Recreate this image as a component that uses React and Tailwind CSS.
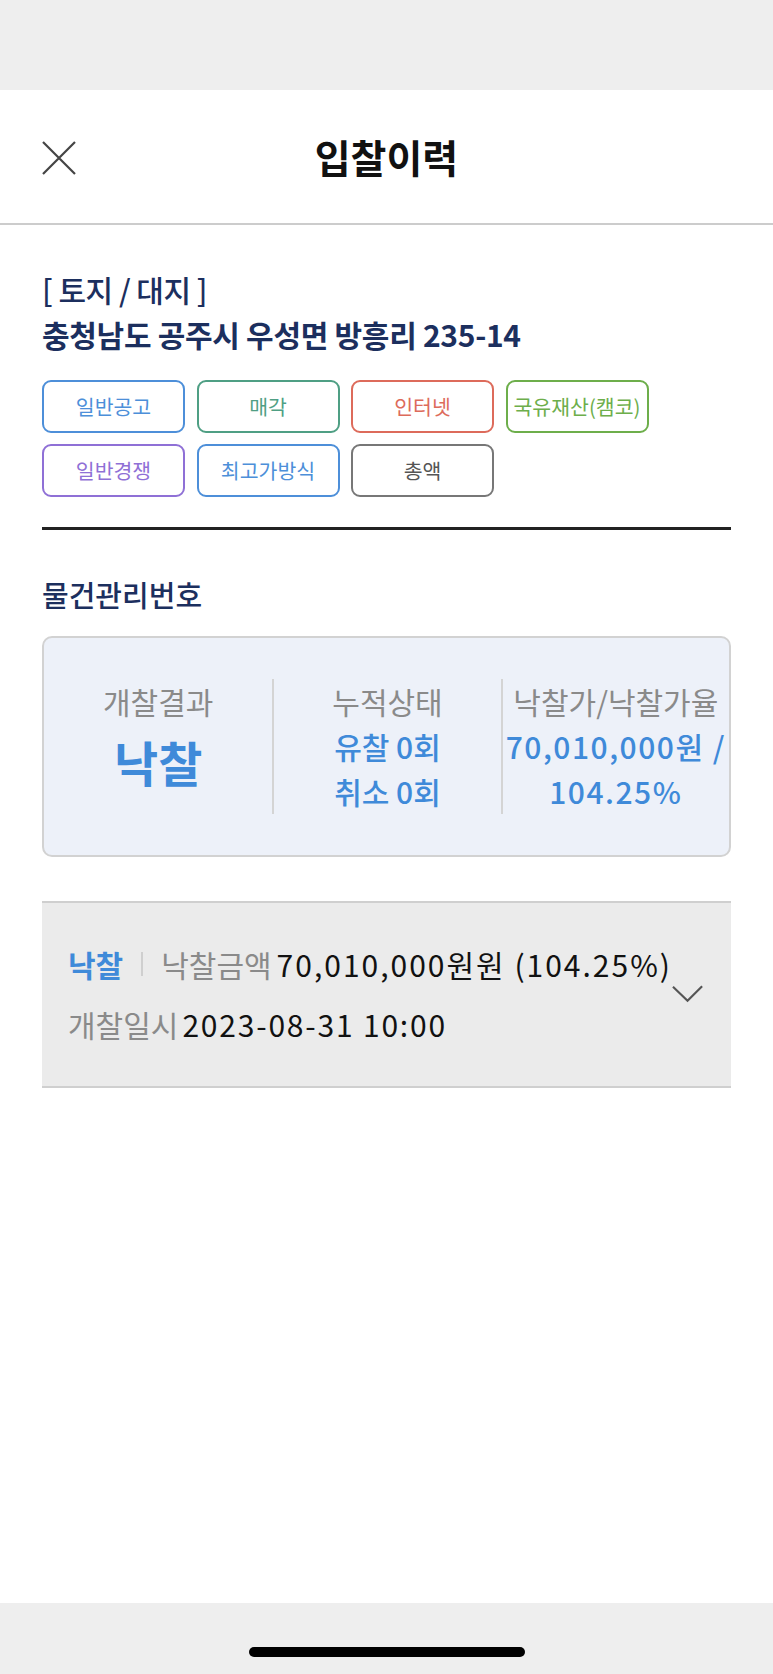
const tags = [
  { label: "일반공고", cls: "border-[#4d8fd9] text-[#4d8fd9]" },
  { label: "매각", cls: "border-[#4f9f84] text-[#4f9f84]" },
  { label: "인터넷", cls: "border-[#dd6b5b] text-[#dd6b5b]" },
  { label: "국유재산(캠코)", cls: "border-[#6dae4b] text-[#6dae4b]" },
  { label: "일반경쟁", cls: "border-[#8f70d6] text-[#8f70d6]" },
  { label: "최고가방식", cls: "border-[#4d8fd9] text-[#4d8fd9]" },
  { label: "총액", cls: "border-[#777777] text-[#555555]" },
];

function CloseIcon() {
  return (
    <svg width="34" height="34" viewBox="0 0 34 34" fill="none">
      <path d="M1 1L33 33M33 1L1 33" stroke="#444" strokeWidth="2.2" />
    </svg>
  );
}

function ChevronDown() {
  return (
    <svg width="32" height="18" viewBox="0 0 32 18" fill="none">
      <path d="M1 1.5L16 16L31 1" stroke="#555" strokeWidth="2.2" />
    </svg>
  );
}

export default function App() {
  return (
    <div className="min-h-screen flex flex-col bg-white font-['Noto_Sans_CJK_KR','Noto_Sans',sans-serif]">
      {/* status bar area */}
      <div className="h-[90px] bg-[#eeeeee]" />

      {/* Header */}
      <div className="h-[135px] flex items-center relative border-b-2 border-[#cccccc] px-[42px]">
        <button className="w-[34px] h-[34px] mt-[2px]">
          <CloseIcon />
        </button>
        <h1 className="absolute left-0 right-0 text-center text-[39px] font-bold text-[#111] pointer-events-none">
          입찰이력
        </h1>
      </div>

      <div className="px-[42px]">
        {/* Title */}
        <div className="pt-[42px] text-[#1c2f5e] leading-[45px]">
          <p className="text-[30px] font-medium tracking-[-0.5px]">[ 토지 / 대지 ]</p>
          <p className="text-[30px] font-bold tracking-[-0.3px]">충청남도 공주시 우성면 방흥리 235-14</p>
        </div>

        {/* Tags */}
        <div className="mt-[23px] grid grid-cols-[repeat(4,143px)] gap-x-[11.5px] gap-y-[11px]">
          {tags.map((t) => (
            <div
              key={t.label}
              className={`h-[53px] rounded-[9px] border-2 flex items-center justify-center text-[20.5px] ${t.cls}`}
            >
              {t.label}
            </div>
          ))}
        </div>

        <div className="mt-[30px] h-[3px] bg-[#222]" />

        {/* Item number */}
        <h2 className="mt-[46px] text-[29px] leading-[36px] font-medium text-[#1c2f5e]">
          물건관리번호
        </h2>

        {/* Summary box */}
        <div className="mt-[24px] h-[221px] rounded-[10px] border-2 border-[#d2d2d2] bg-[#edf1f9] flex items-center">
          <div className="w-full grid grid-cols-3 text-[30px] leading-[45px]">
            <div className="h-[135px] flex flex-col items-center">
              <span className="text-[#8a8a8a]">개찰결과</span>
              <span className="text-[48px] leading-[74px] font-bold text-[#3f8ad9]">낙찰</span>
            </div>
            <div className="h-[135px] flex flex-col items-center border-l-2 border-[#d4d4d4] font-medium">
              <span className="text-[#8a8a8a] font-normal">누적상태</span>
              <span className="text-[#3f8ad9]">유찰 0회</span>
              <span className="text-[#3f8ad9]">취소 0회</span>
            </div>
            <div className="h-[135px] flex flex-col items-center border-l-2 border-[#d4d4d4] font-medium whitespace-nowrap">
              <span className="text-[#8a8a8a] font-normal">낙찰가/낙찰가율</span>
              <span className="text-[#3f8ad9] tracking-[1.5px]">70,010,000원 /</span>
              <span className="text-[#3f8ad9] tracking-[1.5px]">104.25%</span>
            </div>
          </div>
        </div>

        {/* History entry */}
        <div className="mt-[44px] border-y-2 border-[#cfcfcf] bg-[#ebebeb] pl-[26px] pr-[28px] pt-[41px] pb-[42px] flex items-center justify-between">
          <div className="flex flex-col gap-[20px] text-[30px] leading-[40px]">
            <div className="flex items-center whitespace-nowrap">
              <span className="font-bold text-[#3f8ad9]">낙찰</span>
              <span className="mx-[18px] w-[2px] h-[24px] bg-[#cfcfcf]" />
              <span className="text-[#8a8a8a]">낙찰금액</span>
              <span className="ml-[5px] text-[#111] tracking-[2px]">70,010,000원원 (104.25%)</span>
            </div>
            <div className="flex items-center whitespace-nowrap">
              <span className="text-[#8a8a8a]">개찰일시</span>
              <span className="ml-[4px] text-[#111] tracking-[1.8px]">2023-08-31 10:00</span>
            </div>
          </div>
          <ChevronDown />
        </div>
      </div>

      <div className="flex-1" />

      {/* Home indicator */}
      <div className="h-[71px] bg-[#eeeeee] flex justify-center pt-[44px]">
        <div className="w-[276px] h-[10px] rounded-full bg-black" />
      </div>
    </div>
  );
}
